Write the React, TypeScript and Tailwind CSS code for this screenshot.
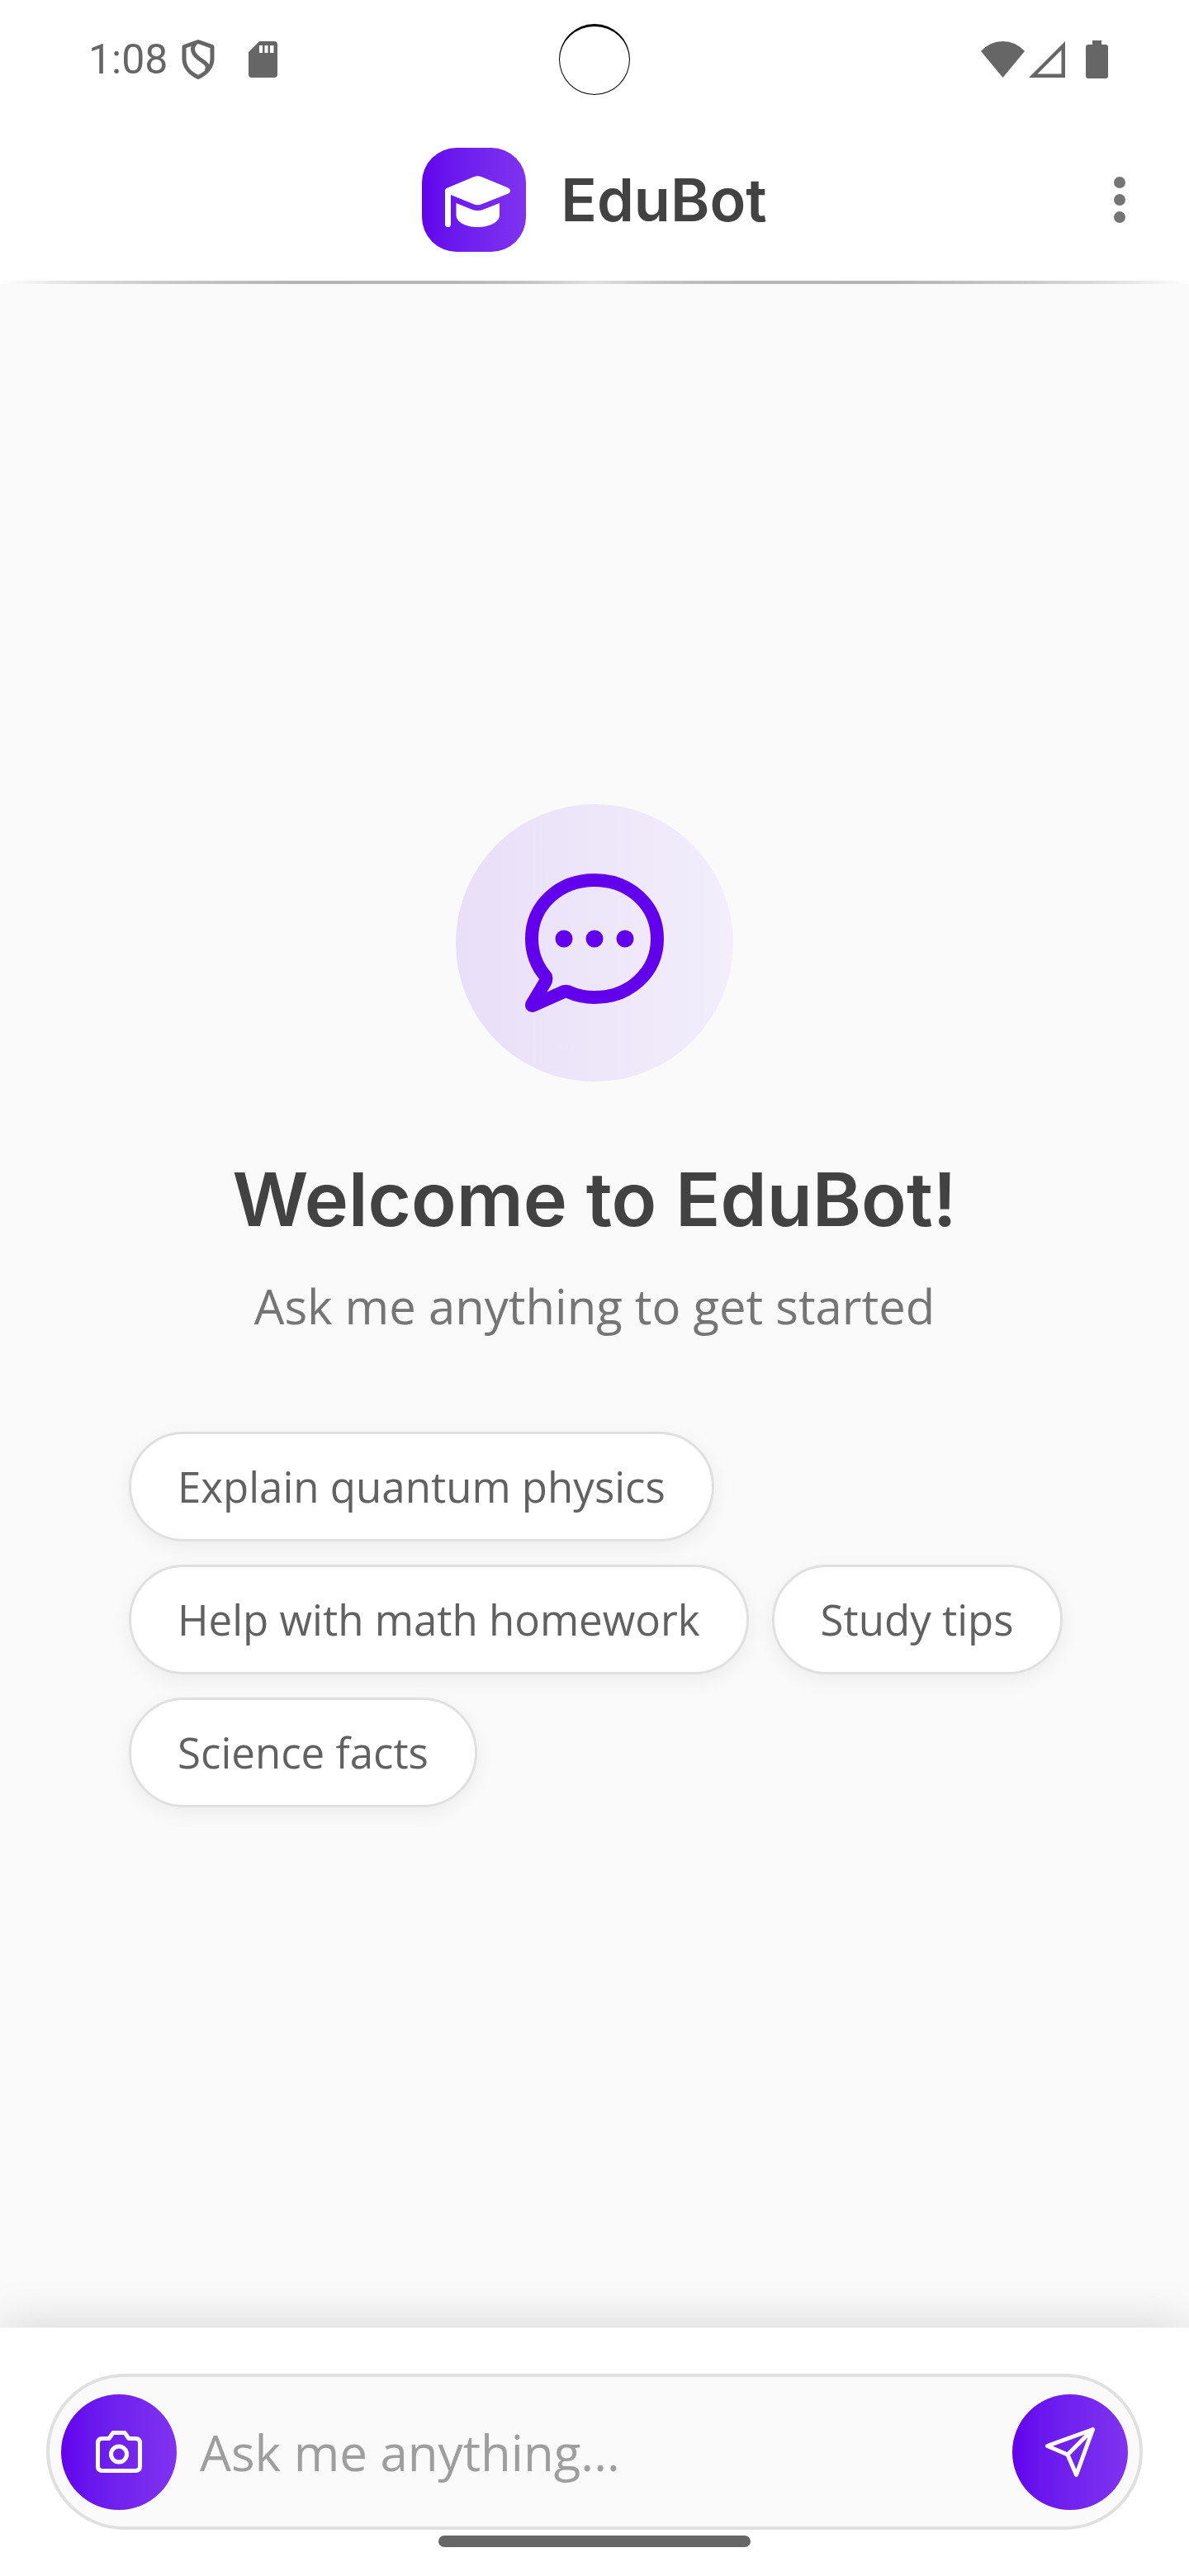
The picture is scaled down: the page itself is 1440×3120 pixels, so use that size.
import React from "react";

const suggestions = [
  "Explain quantum physics",
  "Help with math homework",
  "Study tips",
  "Science facts",
];

function StatusBar() {
  return (
    <div className="relative flex h-[144px] shrink-0 items-center justify-between pl-[107px] pr-[98px] text-[#666666]">
      <div className="flex items-center">
        <span className="font-['Roboto',sans-serif] text-[50px] leading-[56px]">1:08</span>
        <svg className="ml-4 h-[50px] w-[42px]" viewBox="0 0 42 50" fill="none" stroke="currentColor" strokeWidth="5" strokeLinejoin="round">
          <path d="M21 3.5L38 9.5V24C38 34 31 42 21 46.500C11 42 4 34 4 24V9.500Z" />
          <path d="M18 5C12 11 14 18 22 24C31 30 35 33 31 39" />
        </svg>
        <svg className="ml-10 h-[44px] w-[35px]" viewBox="0 0 35 44" fill="currentColor">
          <path fillRule="evenodd" d="M13 0H31Q35 0 35 4V40Q35 44 31 44H4Q0 44 0 40V13ZM13 5V14H17V5ZM19.500 5V14H23.500V5ZM26 5V14H30.500V5Z" />
        </svg>
      </div>
      <div className="absolute left-1/2 top-[29px] size-[86px] -translate-x-1/2 rounded-full border border-t-[3px] border-black bg-white" />
      <div className="flex items-center">
        <svg className="h-[44px] w-[53px]" viewBox="0 0 53 44" fill="currentColor">
          <path d="M0 12Q11 0 26.500 0Q42 0 53 12L26.500 44Z" />
        </svg>
        <svg className="ml-[5px] h-[44px] w-[44px]" viewBox="0 0 44 44" fill="currentColor">
          <path fillRule="evenodd" d="M44 0V44H0ZM39.500 10.500L10.500 39.500H39.500Z" />
        </svg>
        <svg className="ml-[25px] h-[46px] w-[27px]" viewBox="0 0 27 46" fill="currentColor">
          <path d="M8 0H19V5H24Q27 5 27 8V43Q27 46 24 46H3Q0 46 0 43V8Q0 5 3 5H8Z" />
        </svg>
      </div>
    </div>
  );
}

function Header() {
  return (
    <header className="relative flex h-[196px] shrink-0 items-center justify-center gap-[42px]">
      <div className="flex size-[126px] items-center justify-center rounded-[42px] bg-linear-to-r from-[#6200ee] to-[#8032f0]">
        <svg className="h-[65px] w-[88px]" viewBox="-9 -3 88 65" fill="#fff">
          <path d="M34 1.500Q39.500-1 45 1.500L76.500 14.500Q79 16 79 18Q79 20 76.500 21.500L45 34Q39.500 36.500 34 34L7 23V58.500Q7 62 3.500 62Q0 62 0 58.500V18Q0 15.500 3 14.500Z" />
          <path d="M13.500 33L32 40.500Q39.500 43.500 47 40.500L66 33V47.500C66 56 54 62 39.500 62S13.500 56 13.500 47.500Z" />
        </svg>
      </div>
      <h1 className="font-['Inter',sans-serif] text-[72px] font-semibold leading-[84px] text-[#424242]">EduBot</h1>
      <button aria-label="More options" className="absolute right-14 top-1/2 flex h-[84px] w-[56px] -translate-y-1/2 items-center justify-center text-[#757575]">
        <svg className="h-[56px] w-[14px]" viewBox="0 0 14 56" fill="currentColor">
          <circle cx="7" cy="7" r="7" />
          <circle cx="7" cy="28" r="7" />
          <circle cx="7" cy="49" r="7" />
        </svg>
      </button>
    </header>
  );
}

export default function App() {
  return (
    <div className="flex min-h-screen flex-col overflow-hidden bg-white font-['Open_Sans',sans-serif]">
      <StatusBar />
      <Header />
      <div className="h-1 shrink-0 bg-[linear-gradient(90deg,#fff_0%,#dcdcdc_7%,#c8c8c8_14%,#b4b4b4_25%,#b6b6b6_38%,#c2c2c2_44%,#e0e0e0_50%,#c2c2c2_56%,#b6b6b6_62%,#b4b4b4_75%,#c8c8c8_86%,#dcdcdc_93%,#fff_100%)]" />
      <main className="flex flex-1 flex-col items-center justify-center bg-[#fafafa] px-[140px]">
        <div className="flex size-[336px] items-center justify-center rounded-full bg-linear-to-r from-[#e9dff8] to-[#f2eefb]">
          <svg className="size-[168px]" viewBox="0 0 168 168" fill="none">
            <path
              d="M84 8C42 8 8 38 8 79C8 96 14 112 25 125Q26 129 24 132L9 157Q7 160 9 160L47 143Q51 142 54 144C63 148 73 150 84 150C126 150 160 120 160 79S126 8 84 8Z"
              stroke="#6200ee"
              strokeWidth="16"
              strokeLinejoin="round"
            />
            <g fill="#6200ee">
              <circle cx="47" cy="79" r="10.500" />
              <circle cx="84" cy="79" r="10.500" />
              <circle cx="121" cy="79" r="10.500" />
            </g>
          </svg>
        </div>
        <h2 className="mt-20 text-center font-['Inter',sans-serif] text-[90px] font-semibold leading-[126px] text-[#424242]">Welcome to EduBot!</h2>
        <p className="mt-6 text-center text-[58px] leading-[84px] text-[#757575]">Ask me anything to get started</p>
        <div className="mt-[110px] flex flex-wrap gap-[28px] self-stretch pl-4">
          {suggestions.map((label) => (
            <button
              key={label}
              className="rounded-full border-[3px] border-[#e0e0e0] bg-white px-[56px] py-[28px] text-[51px] leading-[71px] text-[#616161] shadow-[0_7px_24px_rgba(0,0,0,0.06)]"
            >
              {label}
            </button>
          ))}
        </div>
      </main>
      <footer className="relative shrink-0 bg-white px-[56px] pb-[56px] pt-[56px] shadow-[0_0_56px_rgba(0,0,0,0.16)]">
        <form className="flex h-[189px] items-center gap-[28px] rounded-full border-4 border-[#e0e0e0] bg-[#fafafa] px-[14px]" onSubmit={(e) => e.preventDefault()}>
          <button type="button" aria-label="Add photo" className="flex size-[140px] shrink-0 items-center justify-center rounded-full bg-linear-to-r from-[#6200ee] to-[#8032f0]">
            <svg className="size-[56px]" viewBox="0 0 56 56" fill="none" stroke="#fff" strokeWidth="5" strokeLinejoin="round">
              <path d="M8 11.500H16L21 4.500H35L40 11.500H48Q53.500 11.500 53.500 17V45Q53.500 50.500 48 50.500H8Q2.500 50.500 2.500 45V17Q2.500 11.500 8 11.500Z" />
              <circle cx="28" cy="30.500" r="9.500" />
            </svg>
          </button>
          <input aria-label="Message" placeholder="Ask me anything..." className="min-w-0 flex-1 bg-transparent text-[60px] leading-[84px] text-[#424242] outline-none placeholder:text-[#9e9e9e]" />
          <button type="submit" aria-label="Send" className="flex size-[140px] shrink-0 items-center justify-center rounded-full bg-linear-to-r from-[#6200ee] to-[#8032f0]">
            <svg className="size-[62px]" viewBox="0 0 62 62" fill="none" stroke="#fff" strokeWidth="5" strokeLinejoin="round" strokeLinecap="round">
              <path d="M58.500 3.500L38.500 58.500L28 34L3.500 23.500ZM58.500 3.500L28 34" />
            </svg>
          </button>
        </form>
        <div className="absolute bottom-[35px] left-1/2 h-[14px] w-[378px] -translate-x-1/2 rounded-full bg-[#666666]" />
      </footer>
    </div>
  );
}
